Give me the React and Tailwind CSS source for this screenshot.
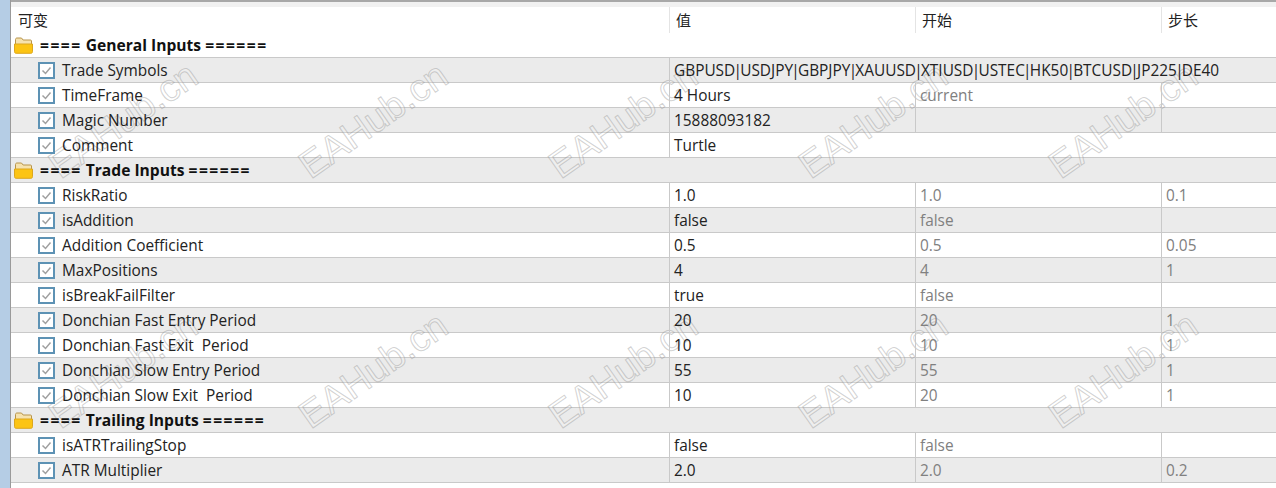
import React from 'react'

const groups = [
  { title: 'General Inputs', rows: [
    ['Trade Symbols', 'GBPUSD|USDJPY|GBPJPY|XAUUSD|XTIUSD|USTEC|HK50|BTCUSD|JP225|DE40', '', '', true],
    ['TimeFrame', '4 Hours', 'current', ''],
    ['Magic Number', '15888093182', '', ''],
    ['Comment', 'Turtle', '', '', true],
  ] },
  { title: 'Trade Inputs', rows: [
    ['RiskRatio', '1.0', '1.0', '0.1'],
    ['isAddition', 'false', 'false', ''],
    ['Addition Coefficient', '0.5', '0.5', '0.05'],
    ['MaxPositions', '4', '4', '1'],
    ['isBreakFailFilter', 'true', 'false', ''],
    ['Donchian Fast Entry Period', '20', '20', '1'],
    ['Donchian Fast Exit  Period', '10', '10', '1'],
    ['Donchian Slow Entry Period', '55', '55', '1'],
    ['Donchian Slow Exit  Period', '10', '20', '1'],
  ] },
  { title: 'Trailing Inputs', rows: [
    ['isATRTrailingStop', 'false', 'false', ''],
    ['ATR Multiplier', '2.0', '2.0', '0.2'],
  ] },
]

const marks = [
  [23, 101], [273, 101], [523, 101], [773, 101], [1023, 101],
  [23, 351], [273, 351], [523, 351], [773, 351], [1023, 351],
]

function Folder() {
  return (
    <svg width="19" height="17" viewBox="0 0 19 17" className="shrink-0">
      <path d="M1.500 14V2.500C1.500 1.700 2.100 1 2.900 1H7.500l1.600 2H16.500c.6 0 1 .5 1 1v4H1.500z" fill="#f6e2ae" stroke="#b8944a" />
      <path d="M.5 7h18v7.700c0 .9-.7 1.600-1.600 1.600H2.100C1.200 16.300.5 15.600.5 14.700z" fill="#fcc414" stroke="#dca71e" />
    </svg>
  )
}

function Check() {
  return (
    <svg width="17" height="17" viewBox="0 0 17 17" className="shrink-0">
      <rect x="1" y="1" width="15" height="15" fill="#ffffff" stroke="#5d92b4" strokeWidth="2" />
      <path d="M4.500 8.500l3 3 5-6" fill="none" stroke="#a0a0a0" strokeWidth="1.500" />
    </svg>
  )
}

// the pipes sit much tighter in the reference than this font sets them
function Value({ text }) {
  const parts = text.split('|')
  return parts.map((p, i) => (
    <React.Fragment key={i}>
      {i > 0 && <span className="mx-[-1.75px]">|</span>}
      {p}
    </React.Fragment>
  ))
}

function Row({ row, shaded }) {
  const [name, value, start, step, span] = row
  return (
    <div className={`flex h-[25px] border-b border-[#c9c9c9] leading-[26px] ${shaded ? 'bg-[#ebebeb]' : 'bg-white'}`}>
      <div className="relative z-10 w-[658px] shrink-0 flex items-center pl-[27px] gap-[7px] text-[#222]">
        <Check />
        <span className="whitespace-pre pt-[2px]">{name}</span>
      </div>
      <div className={`relative z-10 shrink-0 pl-[4px] border-l border-[#c9c9c9] whitespace-pre text-[#222] ${span ? 'flex-1' : 'w-[246px]'}`}><Value text={value} /></div>
      {!span && <div className="relative z-10 w-[246px] shrink-0 pl-[4px] border-l border-[#c9c9c9] text-[#808080]">{start}</div>}
      {!span && <div className="relative z-10 flex-1 pl-[4px] border-l border-[#c9c9c9] text-[#808080]">{step}</div>}
    </div>
  )
}

export default function App() {
  let index = 0
  return (
    <div className="relative flex h-[488px] w-[1276px] overflow-hidden bg-white text-[15.4px] font-['Open_Sans','Noto_Sans_CJK_SC',sans-serif]">
      <div className="w-[11px] shrink-0 bg-[#b5cde5] border-r border-[#9a9a9a]" />
      <div className="flex-1 min-w-0">
        <div className="h-[7px] border-t-2 border-[#a8a8a8] bg-[#f1f1f1]" />
        <div className="flex h-[26px] items-center text-[15px] text-[#222] leading-[26px]">
          <div className="w-[658px] pl-[7px]">可变</div>
          <div className="w-[246px] pl-[6px] border-l border-[#e4e4e4]">值</div>
          <div className="w-[246px] pl-[6px] border-l border-[#e4e4e4]">开始</div>
          <div className="flex-1 pl-[6px] border-l border-[#e4e4e4]">步长</div>
        </div>
        {groups.map(g => {
          const groupShaded = index++ % 2 === 1
          return (
            <div key={g.title}>
              <div className={`flex h-[25px] items-center gap-[7px] pl-[3px] border-b border-[#c9c9c9] ${groupShaded ? 'bg-[#ebebeb]' : 'bg-white'}`}>
                <Folder />
                <span className="relative z-10 whitespace-pre pt-[2px] text-[15.6px] font-bold text-[#111]">
                  <span className="tracking-[1.5px]">====</span> {g.title} <span className="tracking-[1.5px]">======</span>
                </span>
              </div>
              {g.rows.map(r => <Row key={r[0]} row={r} shaded={index++ % 2 === 1} />)}
            </div>
          )
        })}
      </div>
      {marks.map(([x, y]) => (
        <div
          key={`${x}-${y}`}
          style={{ left: x + 'px', top: y + 'px', WebkitTextStroke: '1px rgba(140,140,140,0.4)' }}
          className="absolute w-[200px] -rotate-[35deg] text-center text-[38px] leading-none text-white/20 font-['Liberation_Sans',sans-serif] pointer-events-none"
        >
          EAHub.cn
        </div>
      ))}
    </div>
  )
}
